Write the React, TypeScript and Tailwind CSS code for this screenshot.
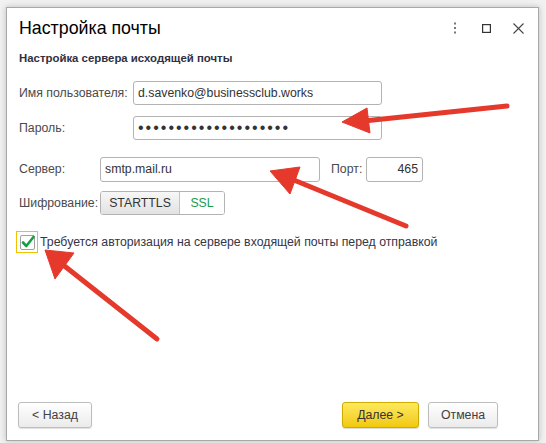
import React from "react";

const font = { fontFamily: '"Liberation Sans", Arial, sans-serif' };

const Field = ({ className, children }: { className: string; children?: React.ReactNode }) => (
  <div
    className={`flex shrink-0 items-center border border-[#b3b3b3] rounded-[3px] bg-white px-1 text-[12.3px] text-[#333] ${className}`}
  >
    {children}
  </div>
);

const Label = ({ className, children }: { className: string; children: React.ReactNode }) => (
  <div className={`shrink-0 whitespace-nowrap ${className}`}>{children}</div>
);

const Button = ({ label, className = "" }: { label: string; className?: string }) => (
  <div
    className={`flex h-[26px] items-center justify-center rounded-[3px] border border-[#bdbdbd] bg-gradient-to-b from-white to-[#ebebeb] text-[12.3px] text-[#404040] shadow-[0_1px_1px_rgba(0,0,0,0.12)] ${className}`}
  >
    {label}
  </div>
);

// red pointers layered over the dialog
const Arrow = ({ tip, b1, b2, tail }: { tip: number[]; b1: number[]; b2: number[]; tail: number[] }) => {
  const mx = (b1[0] + b2[0]) / 2;
  const my = (b1[1] + b2[1]) / 2;
  return (
    <g fill="#e5392c" stroke="#e5392c">
      <line x1={mx} y1={my} x2={tail[0]} y2={tail[1]} strokeWidth={5} strokeLinecap="round" />
      <polygon points={`${tip[0]},${tip[1]} ${b1[0]},${b1[1]} ${b2[0]},${b2[1]}`} strokeWidth={1} strokeLinejoin="round" />
    </g>
  );
};

export default function App() {
  return (
    <div className="relative h-[443px] w-[546px] overflow-hidden bg-[#f1f1f1] pl-[6px] pt-[7px]" style={font}>
      <div className="flex h-[434px] w-[533px] flex-col border border-[#a8a8a8] bg-white shadow-[0_0_6px_rgba(0,0,0,0.22)]">
        {/* header */}
        <div className="flex items-center pl-3 pr-[14px] pt-[9px]">
          <div className="text-[17.8px] leading-[22px] text-black">Настройка почты</div>
          <div className="ml-auto flex items-center">
            <svg width="4" height="12" viewBox="0 0 4 12">
              <rect x="1" y="0.5" width="2" height="2" fill="#777" />
              <rect x="1" y="5" width="2" height="2" fill="#777" />
              <rect x="1" y="9.5" width="2" height="2" fill="#777" />
            </svg>
            <svg className="ml-[25px]" width="9" height="9" viewBox="0 0 9 9">
              <rect x="0.6" y="0.6" width="7.8" height="7.8" fill="none" stroke="#333" strokeWidth="1.2" />
            </svg>
            <svg className="ml-[22px]" width="11" height="11" viewBox="0 0 11 11">
              <path d="M0.5 0.5 L10.5 10.5 M10.5 0.5 L0.5 10.5" stroke="#444" strokeWidth="1.1" />
            </svg>
          </div>
        </div>

        <div className="mt-[11px] pl-3 text-[11.4px] font-bold leading-4 text-[#30303f]">
          Настройка сервера исходящей почты
        </div>

        {/* form */}
        <div className="mt-[15px] pl-3 text-[12.3px] text-[#4a4a4a]">
          <div className="flex items-center">
            <Label className="w-[114px]">Имя пользователя:</Label>
            <Field className="h-6 w-[249px]">d.savenko@businessclub.works</Field>
          </div>
          <div className="mt-[11px] flex items-center">
            <Label className="w-[114px]">Пароль:</Label>
            <Field className="h-6 w-[249px]">
              <span className="text-[16px] leading-none tracking-[2px] text-[#333]">••••••••••••••••••••</span>
            </Field>
          </div>
          <div className="mt-[17px] flex items-center">
            <Label className="w-[81px]">Сервер:</Label>
            <Field className="h-[25px] w-[220px]">smtp.mail.ru</Field>
            <Label className="ml-[11px] w-[35px]">Порт:</Label>
            <Field className="h-[25px] w-[57px] justify-end">465</Field>
          </div>
          <div className="mt-[9px] flex items-center">
            <Label className="w-[81px]">Шифрование:</Label>
            <div className="flex h-6 shrink-0 overflow-hidden rounded-[3px] border border-[#b3b3b3]">
              <div className="flex w-[78px] items-center justify-center bg-gradient-to-b from-[#f7f7f7] to-[#e2e2e2] text-[#333]">
                STARTTLS
              </div>
              <div className="flex w-[45px] items-center justify-center border-l border-[#c4c4c4] bg-white text-[#1c9a4a]">
                SSL
              </div>
            </div>
          </div>
          <div className="-ml-[3px] mt-4 flex items-center">
            <div className="flex h-[22px] w-[22px] shrink-0 items-center justify-center border border-[#f2c200]">
              <div className="relative h-[15px] w-[15px] rounded-[2px] border border-[#a0a0a0] bg-white">
                <svg className="absolute -left-[1px] -top-[2px]" width="16" height="16" viewBox="0 0 16 16">
                  <path d="M3 8.5 L6.3 12 L13.5 3" fill="none" stroke="#16a041" strokeWidth="2.6" strokeLinecap="round" strokeLinejoin="round" />
                </svg>
              </div>
            </div>
            <div className="ml-[2px] whitespace-nowrap text-[#353548]">
              Требуется авторизация на сервере входящей почты перед отправкой
            </div>
          </div>
        </div>

        {/* footer buttons */}
        <div className="mt-auto flex items-center pb-3 pl-[11px] pr-10">
          <Button label="< Назад" className="w-[74px]" />
          <div className="ml-auto flex h-[26px] w-[77px] items-center justify-center rounded-[3px] border border-[#cfab00] bg-gradient-to-b from-[#fde95a] to-[#f1c900] text-[12.3px] text-[#333] shadow-[0_1px_1px_rgba(0,0,0,0.15)]">
            Далее &gt;
          </div>
          <Button label="Отмена" className="ml-[9px] w-[70px]" />
        </div>
      </div>

      <svg className="pointer-events-none absolute inset-0" width="546" height="443" viewBox="0 0 546 443">
        <Arrow tip={[342, 122]} b1={[367, 108]} b2={[370, 133]} tail={[507, 106]} />
        <Arrow tip={[270, 171]} b1={[300, 167]} b2={[290, 194]} tail={[406, 226]} />
        <Arrow tip={[45, 250]} b1={[74, 253]} b2={[55, 279]} tail={[157, 339]} />
      </svg>
    </div>
  );
}
